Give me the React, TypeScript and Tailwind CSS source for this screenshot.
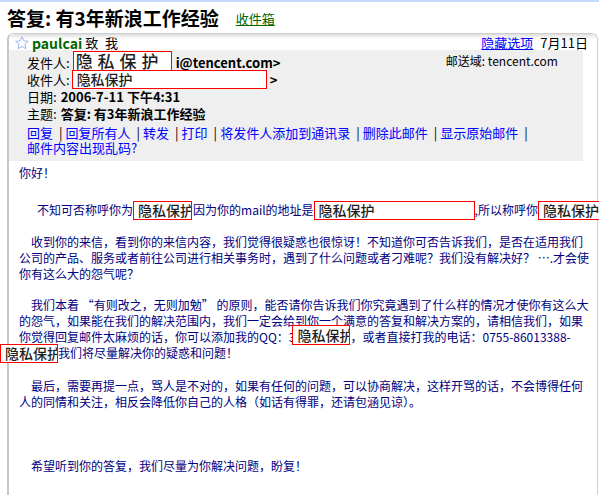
import type { ReactNode } from "react";

function Redact({ className = "", children = "隐私保护" }: { className?: string; children?: ReactNode }) {
  return (
    <span
      className={`flex shrink-0 items-center overflow-hidden whitespace-nowrap border border-[#ff0000] bg-white font-medium text-[#1e1e1e] ${className}`}
    >
      {children}
    </span>
  );
}

function Line({ className = "", children }: { className?: string; children: ReactNode }) {
  return <div className={`flex h-[16px] items-center whitespace-nowrap ${className}`}>{children}</div>;
}

function Sep() {
  return <span className="ml-[6px] mr-[3px] text-black">|</span>;
}

function Star() {
  return (
    <svg width="14" height="14" viewBox="0 0 14 14" className="shrink-0">
      <polygon
        points="7,0.8 8.9,4.9 13.3,5.3 10,8.3 11,12.8 7,10.5 3,12.8 4,8.3 0.7,5.3 5.1,4.9"
        fill="#fafcff"
        stroke="#9cb6e6"
        strokeWidth="1"
        strokeLinejoin="round"
      />
    </svg>
  );
}

export default function App() {
  const links = ["回复", "回复所有人", "转发", "打印", "将发件人添加到通讯录", "删除此邮件", "显示原始邮件"];

  return (
    <div className="relative h-[495px] w-[599px] overflow-hidden bg-white font-['Noto_Sans_CJK_SC','Noto_Sans',sans-serif] text-black">
      <div className="h-[2px] bg-[#c3d9ff]" />

      {/* title */}
      <div className="flex h-[31px] items-center pl-[7px]">
        <h1 className="text-[19px] font-bold leading-none">答复: 有3年新浪工作经验</h1>
        <a className="ml-[17px] mt-[2px] text-[13px] leading-none text-[#006600] underline">收件箱</a>
      </div>

      {/* card */}
      <div className="ml-[7px] w-[591px] rounded-t-[6px] border-l-2 border-r border-t border-[#cdcdcd] border-l-[#c8c8c8]">
        <div className="flex h-[16px] items-center justify-between rounded-t-[6px] bg-[linear-gradient(to_bottom,#dedede,#ffffff_5px)] pl-[6px] pr-[9px] pt-[2px]">
          <div className="flex items-center">
            <Star />
            <span className="ml-[3px] text-[14px] font-bold text-[#006600]">paulcai</span>
            <span className="ml-[3px] text-[13px] tracking-[2px]">致 我</span>
          </div>
          <div className="flex items-center text-[13px]">
            <a className="text-[#0000ff] underline">隐藏选项</a>
            <span className="ml-[7px]">7月11日</span>
          </div>
        </div>

        {/* header panel */}
        <div className="mr-[14px] bg-[#efefef] pb-[6px] pl-[18px] pt-[4px] text-[13px]">
          <div className="flex h-[17px] items-center justify-between whitespace-nowrap pr-[25px]">
            <div className="flex items-center">
              <span>发件人:</span>
              <Redact className="ml-[3px] h-[20px] w-[99px] -translate-y-[2px] pl-[2px] text-[17px] tracking-[5px]" />
              <span className="ml-[4px] font-bold">i@tencent.com&gt;</span>
            </div>
            <span className="-translate-y-[2px] text-[12px]">邮送域: tencent.com</span>
          </div>
          <div className="flex h-[17px] items-center whitespace-nowrap">
            <span>收件人:</span>
            <Redact className="ml-[2px] h-[19px] w-[195px] pl-[4px] text-[14px]" />
            <span className="ml-[3px] font-bold">&gt;</span>
          </div>
          <div className="flex h-[17px] items-center whitespace-nowrap">
            <span>日期:</span>
            <span className="ml-[4px] font-bold">2006-7-11 下午4:31</span>
          </div>
          <div className="flex h-[17px] items-center whitespace-nowrap">
            <span>主题:</span>
            <span className="ml-[4px] font-bold">答复: 有3年新浪工作经验</span>
          </div>
          <div className="mt-[3px] flex h-[15px] items-center whitespace-nowrap">
            {links.map((l) => (
              <span key={l} className="flex items-center">
                <a className="text-[#0000ff]">{l}</a>
                <Sep />
              </span>
            ))}
          </div>
          <div className="flex h-[15px] items-center">
            <a className="text-[#0000ff]">邮件内容出现乱码?</a>
          </div>
        </div>

        {/* body */}
        <div className="h-[340px] pl-[10px] pt-[4px] text-[12px] text-[#000080]">
          <Line>你好！</Line>

          <Line className="mt-[21px] pl-[18px]">
            <span>不知可否称呼你为</span>
            <Redact className="h-[19px] w-[59px] pl-[4px] text-[14px]" />
            <span className="ml-px">因为你的mail的地址是</span>
            <Redact className="h-[19px] w-[161px] pl-[4px] text-[14px]" />
            <span className="flex w-[5px] justify-end overflow-hidden text-[#0000ff] underline">m</span>
            <span>,所以称呼你</span>
            <Redact className="h-[19px] w-[70px] pl-[4px] text-[14px]" />
          </Line>

          <Line className="mt-[16px] pl-[12px]">收到你的来信，看到你的来信内容，我们觉得很疑惑也很惊讶！不知道你可否告诉我们，是否在适用我们</Line>
          <Line>公司的产品、服务或者前往公司进行相关事务时，遇到了什么问题或者刁难呢？我们没有解决好？ ….才会使</Line>
          <Line>你有这么大的怨气呢？</Line>

          <Line className="mt-[15px] pl-[12px]">我们本着 “有则改之，无则加勉” 的原则，能否请你告诉我们你究竟遇到了什么样的情况才使你有这么大</Line>
          <Line>的怨气，如果能在我们的解决范围内，我们一定会给到你一个满意的答复和解决方案的，请相信我们，如果</Line>
          <Line>
            <span>你觉得回复邮件太麻烦的话，你可以添加我的QQ：3</span>
            <Redact className="-ml-[3px] h-[20px] w-[58px] -translate-y-[2px] pl-[4px] text-[14px]" />
            <span>，或者直接打我的电话：0755-86013388-</span>
          </Line>
          <Line>
            <Redact className="-ml-[19px] h-[19px] w-[58px] pl-[4px] text-[14px]" />
            <span>我们将尽量解决你的疑惑和问题！</span>
          </Line>

          <Line className="mt-[17px] pl-[12px]">最后，需要再提一点，骂人是不对的，如果有任何的问题，可以协商解决，这样开骂的话，不会博得任何</Line>
          <Line>人的同情和关注，相反会降低你自己的人格（如话有得罪，还请包涵见谅）。</Line>

          <Line className="mt-[48px] pl-[12px]">希望听到你的答复，我们尽量为你解决问题，盼复！</Line>
        </div>
      </div>
    </div>
  );
}
